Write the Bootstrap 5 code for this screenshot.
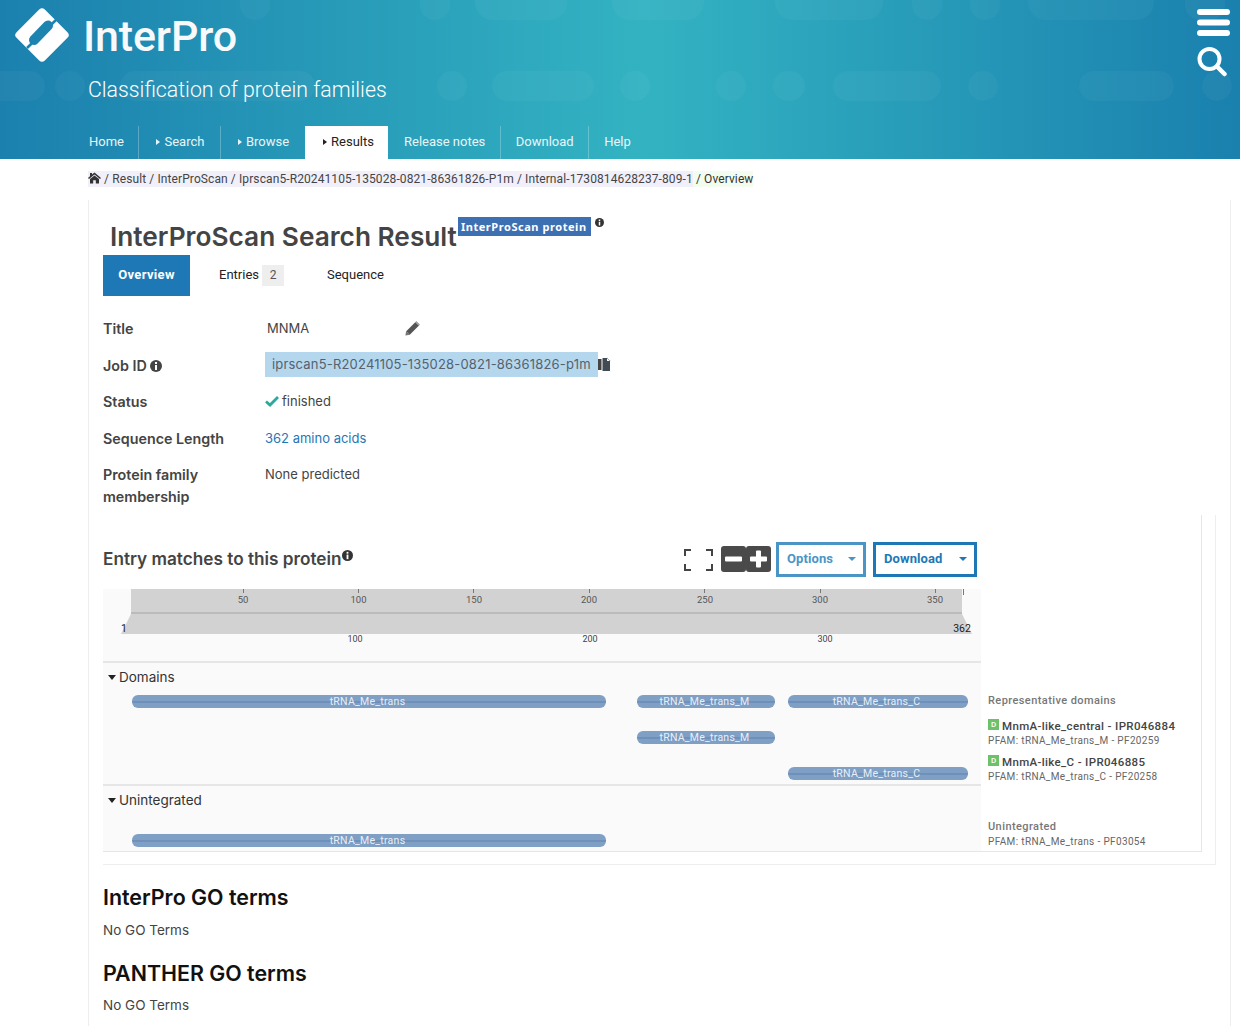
<!DOCTYPE html>
<html lang="en">
  <head>
    <meta charset="UTF-8" />
    <meta name="viewport" content="width=device-width, initial-scale=1.0" />
    <title>InterPro</title>
    <link href="https://cdn.jsdelivr.net/npm/bootstrap@5.3.0/dist/css/bootstrap.min.css" rel="stylesheet" />
    <script src="https://cdn.jsdelivr.net/npm/bootstrap@5.3.0/dist/js/bootstrap.bundle.min.js"></script>
    <style>
      html, body { height: 1026px; overflow: hidden; }
      body { font-family: Inter, Roboto, "Liberation Sans", sans-serif; color: #444; background: #fff; }

      .site-head { height: 159px; position: relative; overflow: hidden; background: linear-gradient(90deg, #1b80ae 0%, #33b3c2 52%, #1a80ae 100%); font-family: Roboto, sans-serif; }
      .head-pills { position: absolute; top: 0; left: 0; }
      .head-main { position: relative; height: 126px; }
      .logo-row { height: 70px; padding-left: 14px; gap: 13px; }
      .logo-word { font-size: 43px; font-weight: 500; color: #f7f9fb; line-height: 1; margin-top: 3px; letter-spacing: -.15px; }
      .head-sub { font-size: 21.3px; font-weight: 300; color: #fff; padding-left: 88px; line-height: 26px; margin-top: 7px; }
      .head-icons { position: absolute; top: 9px; left: 1197px; gap: 11px; }
      .top-nav { position: relative; height: 33px; padding-left: 74px; }
      .top-nav a { color: #e8f5f8; font-size: 13px; padding: 0 14.5px 0 15px; line-height: 32px; text-decoration: none; border-right: 1px solid rgba(255,255,255,.25); display: block; height: 33px; }
      .top-nav a:last-child { border-right: 0; }
      .top-nav a.has-sub { padding: 0 15.5px 0 17px; }
      .top-nav a.on { background: #fff; color: #222; border-right: 0; padding: 0 14px 0 18px; }
      .top-nav a.on + a { padding-left: 16px; }
      .top-nav a.no-line { border-right: 0; padding-right: 16px; }
      .nav-arrow { display: inline-block; border-left: 4px solid currentColor; border-top: 3px solid transparent; border-bottom: 3px solid transparent; margin-right: 4px; vertical-align: 1px; }

      .crumb-row { height: 41px; padding: 12px 0 0 88px; font-size: 12px; line-height: 16px; font-family: Roboto, sans-serif; letter-spacing: .1px; }
      .crumb-a { background: #f1f0fa; color: #444; display: inline-block; }
      .crumb-b { background: #f2fdf0; color: #333; display: inline-block; }

      .page-body { margin-left: 88px; width: 1143px; height: 826px; border-left: 1px solid #eee; border-right: 1px solid #eee; padding-left: 14px; overflow: hidden; }
      .res-title { height: 55px; padding: 17px 0 0 7px; position: relative; }
      .res-title h1 { font-size: 26.25px; font-weight: 600; color: #444; margin: 1px 0 0; line-height: 38px; }
      .type-tag { background: #3d70b2; color: #fff; font-size: 11px; font-weight: 700; letter-spacing: .55px; font-family: "Noto Sans", sans-serif; line-height: 19px; height: 19px; padding: 0 4px 0 3px; margin-left: 1px; border-radius: 0; }

      .tab-row { height: 41px; font-size: 13px; font-family: Roboto, sans-serif; }
      .tab-on { width: 87px; height: 41px; background: #1e78b5; color: #fff; font-weight: 700; line-height: 39px; text-align: center; letter-spacing: .35px; }
      .tab-off { color: #222; line-height: 40px; }
      .tab-count { display: inline-block; width: 22px; height: 21px; line-height: 21px; background: #eee; color: #555; font-size: 12px; text-align: center; margin-left: 3px; }

      .info-box { padding-top: 15px; height: 219px; font-size: 13px; }
      .info-row { display: flex; height: 36.6px; line-height: 34px; }
      .info-key { width: 162px; font-size: 14.3px; font-weight: 600; color: #444; line-height: 36px; }
      .job-id { background: #b5d7ee; height: 25px; line-height: 25px; padding: 0 7px; color: #54626e; width: 333px; margin-top: 4px; white-space: nowrap; letter-spacing: .185px; }

      .match-box { width: 1113px; height: 350px; border-right: 1px solid #eee; border-bottom: 1px solid #eee; }
      .match-inner { width: 1099px; height: 337px; border-right: 1px solid #e6e6e6; border-bottom: 1px solid #e6e6e6; }
      .match-head { height: 74px; width: 878px; padding: 27px 4px 0 0; }
      .match-head h2 { font-size: 17.2px; font-weight: 600; margin: 0; line-height: 34px; color: #444; }
      .zoom-btn { width: 25px; height: 26px; background: #4a4a4a; border-radius: 3px; }
      .tool-btn { border: 3px solid #4b95c6; color: #4b95c6; background: #fff; border-radius: 0; height: 35px; font-family: Roboto, sans-serif; font-size: 13px; font-weight: 700; padding: 0 7px 2px 8px; letter-spacing: .1px; display: flex; align-items: center; justify-content: space-between; }
      .tool-btn.dark { border-color: #1e78b5; color: #1e78b5; }
      .tool-btn::after { margin-left: 0; border-top-width: 4px; border-left-width: 4px; border-right-width: 4px; border-bottom: 0; }

      .viewer { width: 878px; background: #fafafa; height: 262px; }
      .viewer svg text { font-family: Roboto, sans-serif; }
      .sec-name { font-size: 13.5px; color: #333; line-height: 20px; padding-left: 5px; }
      .sec-name::before { content: ""; display: inline-block; border-top: 5px solid #222; border-left: 4px solid transparent; border-right: 4px solid transparent; margin-right: 3px; vertical-align: 2px; }
      .track-sec { border-top: 2px solid #e6e6e6; }
      .track-row { position: relative; height: 36px; }
      .track-bar { position: absolute; top: 0; height: 13px; padding-right: 3px; border-radius: 6px; background: linear-gradient(#7f9fc5 0 45%, #6e91bb 45% 60%, #7f9fc5 60%); color: #e9eff6; font-family: Roboto, sans-serif; font-size: 10.5px; line-height: 13px; text-align: center; letter-spacing: .26px; }

      .legend { width: 220px; padding-left: 7px; color: #666; font-family: Roboto, sans-serif; font-size: 10px; letter-spacing: .35px; line-height: 14px; }
      .leg-head { font-size: 11px; font-weight: 500; color: #777; line-height: 14px; letter-spacing: .42px; }
      .leg-name { font-size: 11.5px; font-weight: 500; color: #444; line-height: 14px; }
      .leg-d { display: inline-block; width: 11px; height: 11px; background: #6cc16a; color: #fff; font-size: 8px; line-height: 11px; text-align: center; vertical-align: 3px; margin-right: 3px; letter-spacing: 0; }

      .go-part h3 { font-size: 21.4px; font-weight: 600; color: #111; line-height: 28px; margin: 0; }
      .go-part p { font-size: 13.5px; line-height: 20px; margin: 0; color: #444; }
    </style>
  </head>
  <body>
    <header class="site-head">
      <svg class="head-pills" width="1240" height="159" fill="#fff" fill-opacity=".035">
        <rect x="240" y="-30" width="30" height="50" rx="15" /><rect x="420" y="-30" width="30" height="50" rx="15" />
        <rect x="475" y="-30" width="92" height="50" rx="18" /><rect x="612" y="-30" width="92" height="50" rx="18" />
        <rect x="775" y="-30" width="108" height="50" rx="18" /><rect x="912" y="-30" width="30" height="50" rx="15" />
        <rect x="970" y="-30" width="30" height="50" rx="15" /><rect x="1028" y="-30" width="126" height="50" rx="18" />
        <rect x="1185" y="-30" width="40" height="50" rx="15" />
        <rect x="-30" y="71" width="75" height="30" rx="15" /><rect x="55" y="71" width="30" height="30" rx="15" />
        <rect x="120" y="71" width="195" height="30" rx="15" /><rect x="437" y="71" width="30" height="30" rx="15" />
        <rect x="492" y="71" width="102" height="30" rx="15" /><rect x="620" y="71" width="30" height="30" rx="15" />
        <rect x="716" y="71" width="30" height="30" rx="15" /><rect x="773" y="71" width="32" height="30" rx="15" />
        <rect x="833" y="71" width="108" height="30" rx="15" /><rect x="968" y="71" width="30" height="30" rx="15" />
        <rect x="1079" y="71" width="95" height="30" rx="15" /><rect x="1202" y="71" width="30" height="30" rx="15" />
      </svg>
      <div class="head-main">
        <div class="logo-row d-flex align-items-center">
          <svg width="56" height="56" viewBox="0 0 56 56">
            <mask id="logoCut"><rect width="56" height="56" fill="#fff" /><path d="M42 13 L13 41" stroke="#000" stroke-width="2.6" /><path d="M34 18.5 L20 33" stroke="#000" stroke-width="10" stroke-linecap="round" /></mask>
            <g mask="url(#logoCut)"><rect x="8" y="8" width="40" height="40" rx="4" fill="#fff" transform="rotate(45 28 28)" /></g>
          </svg>
          <div class="logo-word">InterPro</div>
        </div>
        <div class="head-sub">Classification of protein families</div>
        <div class="head-icons d-flex flex-column align-items-start">
          <svg width="33" height="27" fill="#fff"><rect y="0" width="33" height="6" rx="3" /><rect y="10.5" width="33" height="6" rx="3" /><rect y="21" width="33" height="6" rx="3" /></svg>
          <svg width="30" height="30" viewBox="0 0 30 30" fill="none" stroke="#fff" stroke-linecap="round"><circle cx="12.5" cy="12" r="10" stroke-width="4" /><path d="M20 19.5 L27.5 27" stroke-width="4.5" /></svg>
        </div>
      </div>
      <nav class="top-nav d-flex">
        <a href="#">Home</a>
        <a href="#" class="has-sub"><span class="nav-arrow"></span>Search</a>
        <a href="#" class="has-sub no-line"><span class="nav-arrow"></span>Browse</a>
        <a href="#" class="on"><span class="nav-arrow"></span>Results</a>
        <a href="#">Release notes</a>
        <a href="#">Download</a>
        <a href="#">Help</a>
      </nav>
    </header>

    <div class="crumb-row">
      <span class="crumb-a"><svg width="13" height="12" viewBox="0 0 13 12" fill="#333" style="vertical-align:-1px"><path d="M6.5 0.5 L13 6 L12 7 L6.5 2.5 L1 7 L0 6 L2 4.3 V1 H4 V2.6 Z M2 7 L6.5 3.4 L11 7 V11.5 H7.8 V8.2 H5.2 V11.5 H2 Z" /></svg> / Result / InterProScan / Iprscan5-R20241105-135028-0821-86361826-P1m / Internal-1730814628237-809-1 </span><span class="crumb-b">&nbsp;/ Overview</span>
    </div>

    <main class="page-body">
      <div class="res-title d-flex align-items-start">
        <h1>InterProScan Search Result</h1>
        <span class="type-tag">InterProScan protein</span>
        <svg width="9" height="9" viewBox="0 0 12 12" style="margin:1px 0 0 4px"><circle cx="6" cy="6" r="6" fill="#333" /><rect x="5" y="5" width="2" height="5" fill="#fff" /><rect x="5" y="2" width="2" height="2" fill="#fff" /></svg>
      </div>

      <div class="tab-row d-flex">
        <div class="tab-on">Overview</div>
        <div class="tab-off" style="margin-left:29px">Entries<span class="tab-count">2</span></div>
        <div class="tab-off" style="margin-left:43px">Sequence</div>
      </div>

      <section class="info-box">
        <div class="info-row">
          <div class="info-key">Title</div>
          <div style="width:140px;padding-left:2px">MNMA</div>
          <svg width="16" height="16" viewBox="0 0 16 16" style="margin-top:9px"><path d="M3 13 L13 3" stroke="#555" stroke-width="5" /><path d="M10.4 1.8 L14.2 5.6" stroke="#fff" stroke-width=".8" /><path d="M.4 15.6 L1.2 10.8 L5.2 14.8 Z" fill="#777" /></svg>
        </div>
        <div class="info-row">
          <div class="info-key">Job ID <svg width="12" height="12" viewBox="0 0 12 12" style="vertical-align:-1px"><circle cx="6" cy="6" r="6" fill="#444" /><rect x="5" y="5" width="2" height="5" fill="#fff" /><rect x="5" y="2" width="2" height="2" fill="#fff" /></svg></div>
          <div class="job-id">iprscan5-R20241105-135028-0821-86361826-p1m</div>
          <svg width="13" height="15" viewBox="0 0 13 15" style="margin-top:9px"><rect x="0" y="2" width="8" height="11" fill="#444" /><path d="M4 .5 H9.5 L12.5 3.5 V14.5 H4 Z" fill="#414b53" stroke="#fff" stroke-width="1" /><path d="M9 1 V4 H12" fill="#fff" /></svg>
        </div>
        <div class="info-row">
          <div class="info-key">Status</div>
          <div><svg width="14" height="11" viewBox="0 0 14 11" fill="none" stroke="#2ba89c" stroke-width="2.8" style="margin:0 3px 3px 0"><path d="M1 5.5 L5 9 L13 1" /></svg>finished</div>
        </div>
        <div class="info-row">
          <div class="info-key">Sequence Length</div>
          <div style="color:#1e78b5">362 amino acids</div>
        </div>
        <div class="info-row" style="height:58px">
          <div class="info-key" style="line-height:22px;padding-top:7px">Protein family<br />membership</div>
          <div>None predicted</div>
        </div>
      </section>

      <section class="match-box">
        <div class="match-inner">
          <div class="match-head d-flex align-items-start">
            <h2>Entry matches to this protein<svg class="align-top" width="11" height="11" viewBox="0 0 12 12" style="margin-top:8px"><circle cx="6" cy="6" r="6" fill="#333" /><rect x="5" y="5" width="2" height="5" fill="#fff" /><rect x="5" y="2" width="2" height="2" fill="#fff" /></svg></h2>
            <div class="ms-auto d-flex align-items-start">
              <svg width="29" height="22" fill="none" stroke="#444" stroke-width="2" style="margin:7px 8px 0 0"><path d="M7 1 H1 V7 M22 1 H28 V7 M7 21 H1 V15 M22 21 H28 V15" /></svg>
              <svg class="zoom-btn" viewBox="0 0 25 26" style="margin-top:4px"><rect x="4" y="10.5" width="17" height="5" rx="1" fill="#fff" /></svg>
              <svg class="zoom-btn" viewBox="0 0 25 26" style="margin:4px 5px 0 0"><rect x="4" y="10.5" width="17" height="5" rx="1" fill="#fff" /><rect x="10" y="4.5" width="5" height="17" rx="1" fill="#fff" /></svg>
              <button class="btn tool-btn dropdown-toggle" style="width:90px;margin-right:7px">Options</button>
              <button class="btn tool-btn dark dropdown-toggle" style="width:104px">Download</button>
            </div>
          </div>
          <div class="d-flex">
            <div class="viewer">
              <svg width="878" height="72" class="d-block">
                <rect x="28" y="0" width="831" height="23" fill="#d2d2d2" />
                <rect x="28" y="23" width="831" height="2" fill="#bbb" />
                <polygon points="28,25 859,25 869,45 18,45" fill="#d2d2d2" />
                <g stroke="#777" stroke-width="1">
                  <path d="M140.5 0 V4 M255.5 0 V4 M370.5 0 V4 M486.5 0 V4 M601.5 0 V4 M717.5 0 V4 M832.5 0 V4 M860.5 0 V6" />
                </g>
                <g font-size="9.5" fill="#555" text-anchor="middle">
                  <text x="140" y="14">50</text><text x="255.5" y="14">100</text><text x="371" y="14">150</text><text x="486" y="14">200</text>
                  <text x="602" y="14">250</text><text x="717" y="14">300</text><text x="832" y="14">350</text>
                </g>
                <g font-size="10.5" fill="#222" text-anchor="middle"><text x="21" y="43">1</text><text x="859" y="43">362</text></g>
                <g font-size="9" fill="#444" text-anchor="middle"><text x="252" y="53">100</text><text x="487" y="53">200</text><text x="722" y="53">300</text></g>
              </svg>
              <div class="track-sec" style="height:123px;padding-top:4px">
                <div class="sec-name" style="height:28px">Domains</div>
                <div class="track-row">
                  <div class="track-bar" style="left:29px;width:474px">tRNA_Me_trans</div>
                  <div class="track-bar" style="left:534px;width:138px">tRNA_Me_trans_M</div>
                  <div class="track-bar" style="left:685px;width:180px">tRNA_Me_trans_C</div>
                </div>
                <div class="track-row"><div class="track-bar" style="left:534px;width:138px">tRNA_Me_trans_M</div></div>
                <div class="track-row"><div class="track-bar" style="left:685px;width:180px">tRNA_Me_trans_C</div></div>
              </div>
              <div class="track-sec" style="padding-top:4px">
                <div class="sec-name" style="height:44px">Unintegrated</div>
                <div class="track-row" style="height:13px"><div class="track-bar" style="left:29px;width:474px">tRNA_Me_trans</div></div>
              </div>
            </div>
            <div class="legend">
              <div class="leg-head" style="margin-top:105px">Representative domains</div>
              <div class="leg-name" style="margin-top:11px"><span class="leg-d">D</span>MnmA-like_central - IPR046884</div>
              <div style="margin-top:1px">PFAM: tRNA_Me_trans_M - PF20259</div>
              <div class="leg-name" style="margin-top:7px"><span class="leg-d">D</span>MnmA-like_C - IPR046885</div>
              <div style="margin-top:1px">PFAM: tRNA_Me_trans_C - PF20258</div>
              <div class="leg-head" style="margin-top:36px">Unintegrated</div>
              <div style="margin-top:1px">PFAM: tRNA_Me_trans - PF03054</div>
            </div>
          </div>
        </div>
      </section>

      <div class="go-part" style="margin-top:18px">
        <h3>InterPro GO terms</h3>
        <p style="margin-top:9px">No GO Terms</p>
      </div>
      <div class="go-part" style="margin-top:19px">
        <h3>PANTHER GO terms</h3>
        <p style="margin-top:8px">No GO Terms</p>
      </div>
    </main>
  </body>
</html>
